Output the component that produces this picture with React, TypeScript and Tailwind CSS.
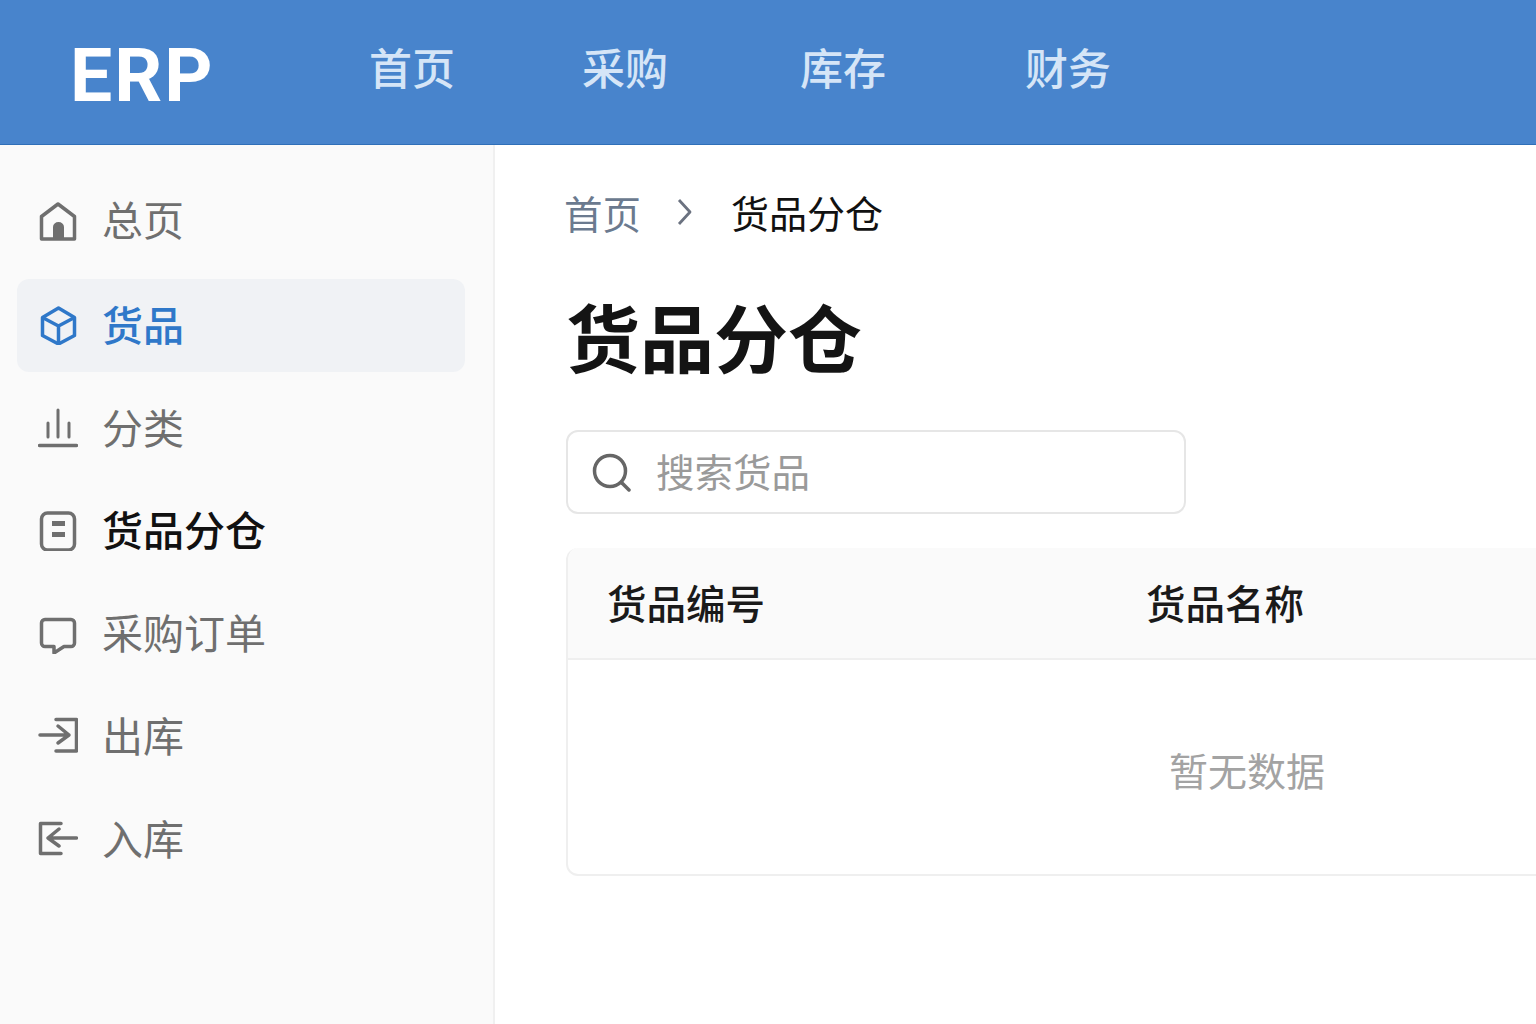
import * as React from "react"

const cjk = "font-['Noto_Sans_CJK_SC','Noto_Sans',sans-serif]"

function HomeIcon() {
  return (
    <svg viewBox="0 0 40 40" className="h-10 w-10" fill="none" stroke="currentColor" strokeWidth="3.5">
      <path d="M3.500 38V15.500L20 3l16.500 12.500V38z" strokeLinejoin="round" />
      <path d="M15 38V26a5.500 5 0 0 1 11 0v12z" fill="currentColor" stroke="none" />
    </svg>
  )
}

function BoxIcon() {
  return (
    <svg viewBox="0 0 40 40" className="h-10 w-10" fill="none" stroke="currentColor" strokeWidth="3.5" strokeLinejoin="round">
      <path d="M20.500 3l16 9.500v18L20.500 39l-16-8.500v-18z" />
      <path d="M4.500 12.500l16 8.500 16-8.500M20.500 21v18" />
    </svg>
  )
}

function ChartIcon() {
  return (
    <svg viewBox="0 0 40 40" className="h-10 w-10" fill="none" stroke="currentColor" strokeLinecap="round">
      <path d="M1.500 37.500h37" strokeWidth="3.500" />
      <path d="M10 15v14M20 2v27M31 15v14" strokeWidth="3" />
    </svg>
  )
}

function CardIcon() {
  return (
    <svg viewBox="0 0 40 40" className="h-10 w-10" fill="none" stroke="currentColor">
      <rect x="3.500" y="2" width="33" height="37" rx="6" strokeWidth="3.500" />
      <path d="M14 10h13v5H14zM14 21h13v5H14z" fill="currentColor" stroke="none" />
    </svg>
  )
}

function ChatIcon() {
  return (
    <svg viewBox="0 0 40 40" className="h-10 w-10" fill="none" stroke="currentColor" strokeWidth="3.5" strokeLinejoin="round">
      <path d="M7 5.500h26a3.500 3.500 0 0 1 3.500 3.500V29a3.500 3.500 0 0 1-3.500 3.500h-7L16 39v-6.500H7A3.500 3.500 0 0 1 3.500 29V9A3.500 3.500 0 0 1 7 5.500z" />
    </svg>
  )
}

function OutIcon() {
  return (
    <svg viewBox="0 0 40 40" className="h-10 w-10" fill="none" stroke="currentColor" strokeWidth="3.5" strokeLinecap="round" strokeLinejoin="round">
      <path d="M18 3.500h20.500v31.500H18" />
      <path d="M2 19h29M20 10l11 9-11 8" />
    </svg>
  )
}

function InIcon() {
  return (
    <svg viewBox="0 0 40 40" className="h-10 w-10" fill="none" stroke="currentColor" strokeWidth="3.5" strokeLinecap="round" strokeLinejoin="round">
      <path d="M23 4.500H2.500V34.500H23" />
      <path d="M38.500 19H10M21 10l-11 9 11 8" />
    </svg>
  )
}

const sideItems = [
  { label: "总页", icon: <HomeIcon />, tone: "muted" },
  { label: "货品", icon: <BoxIcon />, tone: "active" },
  { label: "分类", icon: <ChartIcon />, tone: "muted" },
  { label: "货品分仓", icon: <CardIcon />, tone: "current" },
  { label: "采购订单", icon: <ChatIcon />, tone: "muted" },
  { label: "出库", icon: <OutIcon />, tone: "muted" },
  { label: "入库", icon: <InIcon />, tone: "muted" },
]

export default function App() {
  return (
    <div className={`flex h-screen w-full flex-col overflow-hidden bg-white ${cjk}`}>
      <header className="flex h-[145px] shrink-0 items-center border-b border-[#2f6fb8] bg-[#4884cc] pl-[70px]">
        <span className="mt-[6px] w-[299px] font-['Roboto',sans-serif] text-[75px] font-bold leading-none tracking-[2px] text-white">ERP</span>
        <nav className="-mt-3 flex text-[43px] font-medium leading-none text-[#d5e5f7]">
          <a>首页</a>
          <a className="ml-[127px]">采购</a>
          <a className="ml-[132px]">库存</a>
          <a className="ml-[139px]">财务</a>
        </nav>
      </header>

      <div className="flex min-h-0 flex-1">
        <aside className="flex w-[495px] shrink-0 flex-col gap-[9.8px] border-r-2 border-[#f0f0f0] bg-[#fafafa] pl-[17px] pr-[28px] pt-[31px]">
          {sideItems.map((item) => (
            <div
              key={item.label}
              className={`flex h-[93px] items-center gap-[24px] rounded-xl pb-1 pl-[21px] text-[41px] leading-none first:pb-2 ${
                item.tone === "active" ? "bg-[#f0f2f5] font-medium text-[#2f78c9]" : ""
              } ${item.tone === "current" ? "font-medium text-[#111111]" : ""} ${
                item.tone === "muted" ? "text-[#6f6f6f]" : ""
              }`}
            >
              <span className={`mt-1 ${item.tone === "active" ? "text-[#2f78c9]" : "text-[#6f6f6f]"}`}>{item.icon}</span>
              <span>{item.label}</span>
            </div>
          ))}
        </aside>

        <main className="min-w-0 flex-1 pl-[71px] pt-[45px]">
          <div className="-ml-[2px] flex h-[44px] items-center text-[38.5px] leading-none">
            <span className="text-[#6b7a8f]">首页</span>
            <svg viewBox="0 0 20 30" className="ml-[34px] mr-[36px] h-[30px] w-[20px]" fill="none" stroke="#6b7280" strokeWidth="2.8">
              <path d="M4 3l11 12-11 12" strokeLinejoin="round" />
            </svg>
            <span className="text-[38px] text-[#111111]">货品分仓</span>
          </div>

          <h1 className="mt-[56px] text-[74px] font-bold leading-[90px] text-[#141414]">货品分仓</h1>

          <div className="mt-[50px] flex h-[84px] w-[620px] items-center gap-[24px] rounded-xl border-2 border-[#e6e6e6] pl-[24px]">
            <svg viewBox="0 0 40 40" className="h-10 w-10 shrink-0" fill="none" stroke="#666666" strokeWidth="3.5" strokeLinecap="round">
              <circle cx="18" cy="19" r="15.5" />
              <path d="M30 31l7 7" />
            </svg>
            <input
              placeholder="搜索货品"
              className="mb-[5px] min-w-0 flex-1 bg-transparent text-[38.5px] leading-none text-[#111111] outline-none placeholder:text-[#9a9a9a]"
            />
          </div>

          <div className="mt-[34px] w-[1362px] overflow-hidden rounded-xl border-2 border-t-0 border-[#efefef]">
            <div className="-mx-[2px] flex h-[112px] items-center border-b-2 border-[#efefef] bg-[#fafafa] pb-[2px] text-[39.5px] font-medium leading-none text-[#1a1a1a]">
              <div className="w-[539px] pl-[41px]">货品编号</div>
              <div className="pl-[41px]">货品名称</div>
            </div>
            <div className="flex h-[214px] items-center justify-center pt-1 text-[39px] leading-none text-[#a3a3a3]">暂无数据</div>
          </div>
        </main>
      </div>
    </div>
  )
}
